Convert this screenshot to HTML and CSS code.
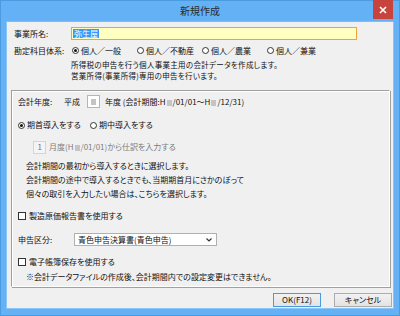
FILE: index.html
```html
<!DOCTYPE html>
<html lang="ja">
<head>
  <meta charset="UTF-8" />
  <title>新規作成</title>
  <link rel="stylesheet" href="styles.css">
</head>
<body>

  <div class="window">
    <!-- Title bar -->
    <div class="titlebar">
      <span class="title">新規作成</span>
      <span class="close">
        <svg width="8" height="8" viewBox="0 0 8 8"><path d="M1 1L7 7M7 1L1 7" stroke="#fff" stroke-width="1.6"/></svg>
      </span>
    </div>

    <div class="client">
      <div class="row name-row">
        <span class="lbl">事業所名:</span>
        <div class="textbox"><span class="sel">弥生屋</span></div>
      </div>

      <div class="row acct-row">
        <span class="lbl lbl-wide">勘定科目体系:</span>
        <span class="opt"><i class="radio on"></i>個人／一般</span>
        <span class="opt"><i class="radio"></i>個人／不動産</span>
        <span class="opt"><i class="radio"></i>個人／農業</span>
        <span class="opt"><i class="radio"></i>個人／兼業</span>
      </div>

      <div class="acct-note">
        <p>所得税の申告を行う個人事業主用の会計データを作成します。</p>
        <p>営業所得(事業所得)専用の申告を行います。</p>
      </div>

      <!-- Settings panel -->
      <div class="group">
        <div class="row year-row">
          <span class="lbl-year">会計年度:</span>
          <span class="era">平成</span>
          <span class="numbox"><i class="blur"></i></span>
          <span>年度 (会計期間:H<i class="blur"></i>/01/01～H<i class="blur"></i>/12/31)</span>
        </div>

        <div class="row start-row">
          <span class="opt2"><i class="radio on"></i>期首導入をする</span>
          <span class="opt2"><i class="radio"></i>期中導入をする</span>
        </div>

        <div class="row month-row">
          <span class="numbox dis">1</span>
          <span>月度(H<i class="blur"></i>/01/01)から仕訳を入力する</span>
        </div>

        <div class="start-note">
          <p>会計期間の最初から導入するときに選択します。</p>
          <p>会計期間の途中で導入するときでも、当期期首月にさかのぼって</p>
          <p>個々の取引を入力したい場合は、こちらを選択します。</p>
        </div>

        <div class="row check-row first-check">
          <i class="check"></i>製造原価報告書を使用する
        </div>

        <div class="row kind-row">
          <span class="lbl-year">申告区分:</span>
          <div class="select">
            <span>青色申告決算書(青色申告)</span>
            <svg width="6" height="4" viewBox="0 0 6 4"><path d="M0.5 0.5L3 3L5.5 0.5" fill="none" stroke="#333" stroke-width="1.2"/></svg>
          </div>
        </div>

        <div class="row check-row">
          <i class="check"></i>電子帳簿保存を使用する
        </div>

        <p class="warn">※会計データファイルの作成後、会計期間内での設定変更はできません。</p>
      </div>

      <div class="buttons">
        <button class="btn default">OK(F12)</button>
        <button class="btn cancel">キャンセル</button>
      </div>
    </div>
  </div>

</body>
</html>
```

FILE: styles.css
```css
* {
  box-sizing: border-box;
}

body {
  margin: 0;
  font-family: "Noto Sans CJK JP", sans-serif;
  font-size: 8px;
  line-height: 1;
  font-feature-settings: "palt";
  color: #111;
}

p {
  margin: 0;
}

.window {
  position: relative;
  width: 400px;
  height: 316px;
  background: #64b2f5;
  border: 1px solid #4a9be0;
  padding: 0 5px 6px;
  display: flex;
  flex-direction: column;
}

/* Title bar */
.titlebar {
  height: 20px;
  display: flex;
  align-items: center;
  justify-content: center;
}

.title {
  font-size: 10px;
  color: #2b2b2b;
}

.close {
  position: absolute;
  top: -1px;
  right: 6px;
  width: 20px;
  height: 19px;
  background: #c7443d;
  display: flex;
  align-items: center;
  justify-content: center;
}

.client {
  flex: 1;
  background: #f0f0f0;
  border: 1px solid #8cc4f5;
  border-top-color: #7dbcf3;
}

.row {
  display: flex;
  align-items: center;
}

.lbl {
  width: 57px;
  flex-shrink: 0;
}

/* Business name */
.name-row {
  margin-top: 5px;
  padding-left: 7px;
  height: 13px;
}

.textbox {
  width: 286px;
  height: 13px;
  background: #ffffc2;
  border: 1px solid #f0a33c;
  padding: 1px 1px;
  display: flex;
  align-items: center;
}

.sel {
  background: #3399ff;
  color: #fff;
  padding: 0 1px;
  line-height: 9px;
}

/* Account system radios */
.acct-row {
  margin-top: 4px;
  padding-left: 7px;
  height: 13px;
}

.lbl-wide {
  width: 58px;
}

.opt {
  width: 65px;
  display: flex;
  align-items: center;
}

.radio {
  width: 7px;
  height: 7px;
  border: 1px solid #333;
  border-radius: 50%;
  background: #fff;
  margin-right: 2px;
  flex-shrink: 0;
  display: flex;
  align-items: center;
  justify-content: center;
}

.radio.on::after {
  content: "";
  width: 3px;
  height: 3px;
  border-radius: 50%;
  background: #111;
}

.acct-note {
  margin-top: 2px;
  padding-left: 64px;
  font-size: 7.5px;
  letter-spacing: 0.3px;
  line-height: 11px;
}

/* Settings panel */
.group {
  margin: 9px 3px 0 4px;
  height: 197px;
  border: 1px solid #a0a0a0;
  border-right-color: #fff;
  border-bottom-color: #fff;
  box-shadow: inset 1px 1px 0 #fff, 1px 1px 0 #a0a0a0;
  padding-left: 6px;
}

.year-row {
  margin-top: 4px;
  height: 13px;
}

.lbl-year {
  width: 46px;
}

.era {
  width: 23px;
}

.numbox {
  width: 13px;
  height: 13px;
  background: #fff;
  border: 1px solid #b5b5b5;
  margin-right: 5px;
  display: flex;
  align-items: center;
  justify-content: center;
}

.numbox.dis {
  background: #f4f4f4;
  border-color: #d4d4d4;
  color: #777;
  justify-content: flex-end;
  padding-right: 3px;
  margin-left: 15px;
  margin-right: 3px;
}

.blur {
  display: inline-block;
  width: 5px;
  height: 6px;
  background: #c4c4c4;
  margin: 0 1px;
  vertical-align: -1px;
}

.start-row {
  margin-top: 11px;
  height: 12px;
}

.opt2 {
  width: 72px;
  display: flex;
  align-items: center;
}

.month-row {
  margin-top: 10px;
  height: 12px;
  color: #7d7d7d;
}

.start-note {
  margin-top: 6px;
  padding-left: 8px;
  line-height: 14px;
}

.check-row {
  height: 12px;
  margin-top: 10px;
}

.first-check {
  margin-top: 9px;
}

.check {
  width: 8px;
  height: 8px;
  border: 1px solid #333;
  background: #fff;
  margin-right: 3px;
}

.kind-row {
  margin-top: 11px;
  height: 13px;
}

.select {
  margin-left: 10px;
  width: 143px;
  height: 13px;
  background: #fff;
  border: 1px solid #b0b0b0;
  padding: 0 4px 0 3px;
  display: flex;
  align-items: center;
  justify-content: space-between;
}

.warn {
  margin-top: 4px;
  padding-left: 8px;
  line-height: 10px;
}

/* Bottom buttons */
.buttons {
  margin-top: 6px;
  display: flex;
  justify-content: flex-end;
  gap: 13px;
  padding-right: 1px;
}

.btn {
  height: 14px;
  font: inherit;
  font-feature-settings: "palt";
  color: #111;
  background: linear-gradient(#f2f2f2, #e3e3e3);
  border: 1px solid #acacac;
  padding: 0;
}

.btn.default {
  width: 48px;
  border-color: #4a9ae0;
}

.btn.cancel {
  width: 58px;
}
```
